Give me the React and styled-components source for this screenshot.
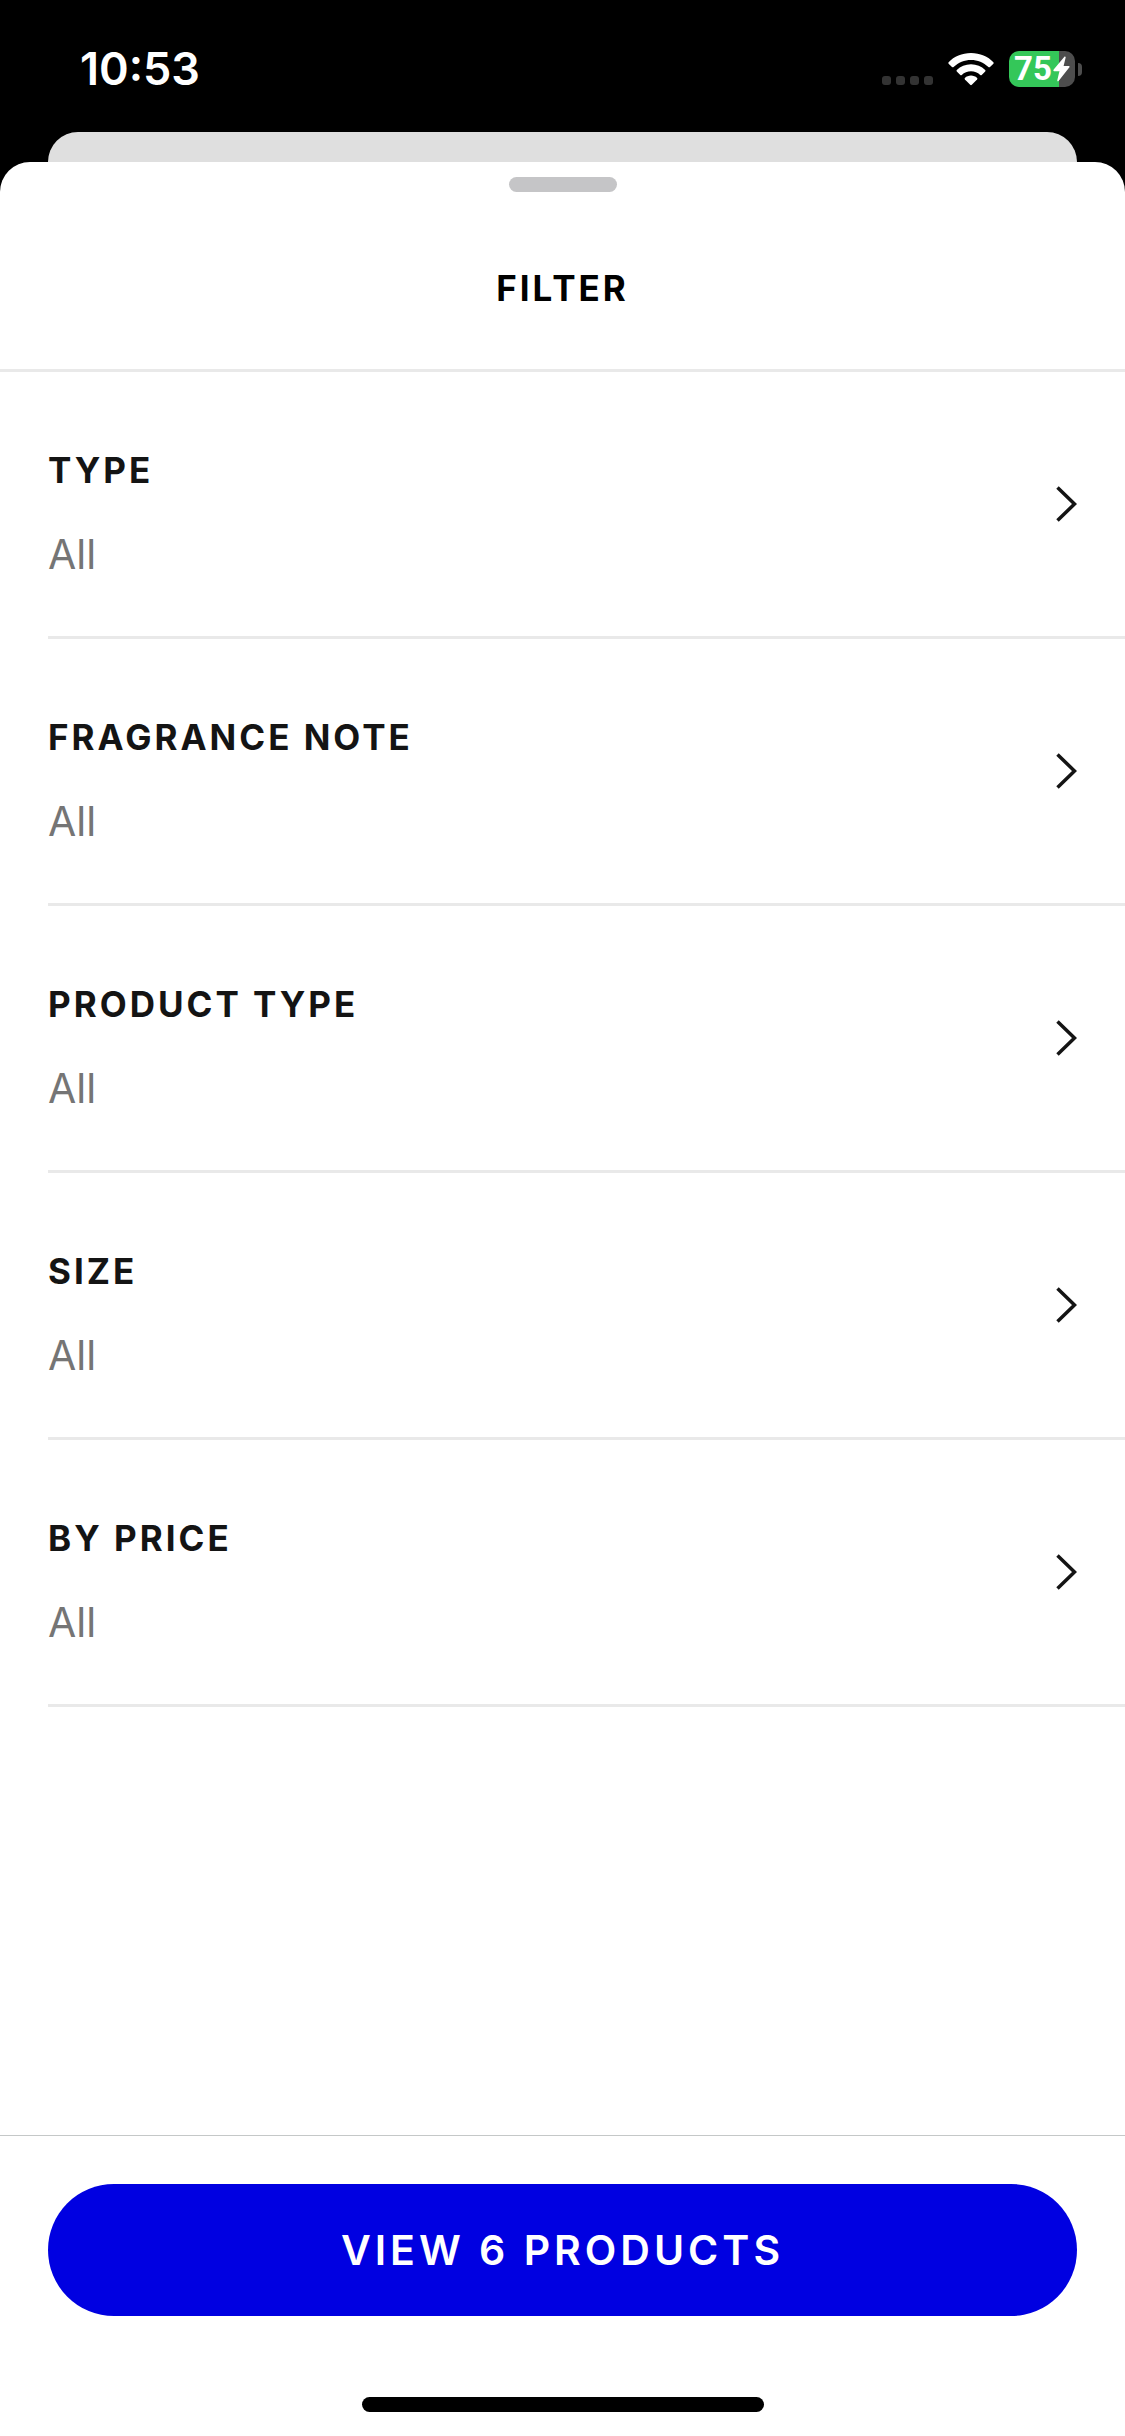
import React from 'react';
import styled, { createGlobalStyle } from 'styled-components';

const GlobalStyle = createGlobalStyle`
  * {
    box-sizing: border-box;
  }

  body {
    margin: 0;
    background-color: #000;
    font-family: Inter, 'Liberation Sans', sans-serif;
  }

  button {
    font-family: inherit;
    cursor: pointer;
  }
`;

const Screen = styled.div`
  display: flex;
  flex-direction: column;
  min-height: 100vh;
  background-color: #000;
`;

const StatusBar = styled.header`
  display: flex;
  justify-content: space-between;
  align-items: center;
  height: 132px;
  padding: 6px 43px 0 80px;
  color: #fff;
`;

const Time = styled.time`
  font-size: 45px;
  font-weight: 600;
  line-height: 48px;
`;

const StatusIcons = styled.div`
  display: flex;
  align-items: center;
  gap: 15px;
`;

const BatteryContainer = styled.div`
  display: flex;
  align-items: center;
  gap: 3px;
`;

const BatteryBody = styled.div`
  display: flex;
  align-items: center;
  justify-content: center;
  gap: 1px;
  width: 66px;
  height: 36px;
  border-radius: 10px;
  background: linear-gradient(to right, #34c759 76%, #4d4d4d 76%);
`;

const BatteryLevel = styled.span`
  font-family: Roboto, 'Liberation Sans', sans-serif;
  font-size: 33px;
  font-weight: 700;
  line-height: 36px;
`;

const BatteryTip = styled.div`
  width: 4px;
  height: 13px;
  border-radius: 0 4px 4px 0;
  background-color: #4d4d4d;
`;

const BackCard = styled.div`
  height: 30px;
  margin: 0 48px;
  border-radius: 30px 30px 0 0;
  background-color: #dfdfdf;
`;

const Sheet = styled.main`
  display: flex;
  flex: 1;
  flex-direction: column;
  border-radius: 30px 30px 0 0;
  background-color: #fff;
`;

const SheetHeader = styled.div`
  display: flex;
  flex-direction: column;
  align-items: center;
  gap: 72px;
  padding: 15px 48px 57px;
  border-bottom: 3px solid #e9e9e9;
`;

const Grabber = styled.div`
  width: 108px;
  height: 15px;
  border-radius: 8px;
  background-color: #c5c5c7;
`;

const Title = styled.h1`
  margin: 0;
  color: #000;
  font-size: 35px;
  font-weight: 700;
  line-height: 48px;
  letter-spacing: 3px;
`;

const FilterList = styled.ul`
  flex: 1;
  margin: 0;
  padding: 0 0 0 48px;
  list-style: none;
`;

const FilterButton = styled.button`
  display: flex;
  justify-content: space-between;
  align-items: center;
  width: 100%;
  padding: 0 48px 0 0;
  border: 0;
  border-bottom: 3px solid #e9e9e9;
  background: none;
  text-align: left;
`;

const FilterText = styled.span`
  display: flex;
  flex-direction: column;
  gap: 36px;
  padding: 74px 0 58px;
`;

const FilterLabel = styled.span`
  color: #141414;
  font-size: 35px;
  font-weight: 700;
  line-height: 48px;
  letter-spacing: 3px;
`;

const FilterValue = styled.span`
  color: #757575;
  font-size: 41px;
  line-height: 48px;
`;

const Footer = styled.footer`
  display: flex;
  flex-direction: column;
  align-items: center;
  gap: 81px;
  padding: 48px 48px 24px;
  border-top: 1px solid #c5c8c8;
`;

const ViewButton = styled.button`
  width: 100%;
  height: 132px;
  border: 0;
  border-radius: 66px;
  background-color: #0000e1;
  color: #fff;
  font-size: 41px;
  font-weight: 600;
  line-height: 48px;
  letter-spacing: 4px;
`;

const HomeIndicator = styled.div`
  width: 402px;
  height: 15px;
  border-radius: 8px;
  background-color: #000;
`;

const CellularDots = () => (
  <svg width="51" height="33" viewBox="0 0 51 33" fill="#333" aria-hidden="true">
    {[0, 14, 28, 42].map((x) => (
      <rect key={x} x={x} y="23" width="9" height="9" rx="3" />
    ))}
  </svg>
);

const WifiIcon = () => (
  <svg width="46" height="33" viewBox="0 0 46 33" fill="#fff" aria-hidden="true">
    <path d="M23 0C32 0 40 3.500 45.400 9.200Q46 10 45.400 10.700L42 14Q41.200 14.600 40.400 14C35.600 9.600 29.600 7 23 7S10.400 9.600 5.600 14Q4.800 14.600 4 14L.600 10.700Q0 10 .600 9.200C6 3.500 14 0 23 0Z" />
    <path d="M23 11.300C28.500 11.300 33.500 13.400 37.200 17Q37.900 17.800 37.200 18.500L33.700 21.900Q33 22.500 32.200 21.900C29.700 19.600 26.500 18.300 23 18.300S16.300 19.600 13.800 21.900Q13 22.500 12.300 21.900L8.800 18.500Q8.100 17.800 8.800 17C12.500 13.400 17.500 11.300 23 11.300Z" />
    <path d="M23 22.600C25.300 22.600 27.500 23.500 29.100 24.900Q29.800 25.600 29.100 26.400L23.800 31.800Q23 32.500 22.200 31.800L16.900 26.400Q16.200 25.600 16.900 24.900C18.500 23.500 20.700 22.600 23 22.600Z" />
  </svg>
);

const BoltIcon = () => (
  <svg width="17" height="26" viewBox="0 0 17 26" fill="#fff" aria-hidden="true">
    <path d="M11.600.500Q13 .300 12.600 1.800L10.600 10H15.800Q17.200 10.300 16.200 11.500L5.600 25Q4.200 26 4.300 24.200L6.400 15.200H1.200Q-.200 14.800.700 13.600Z" />
  </svg>
);

const Chevron = () => (
  <svg width="21" height="36" viewBox="0 0 21 36" fill="none" aria-hidden="true">
    <path d="M1.500 1.500L18.500 18L1.500 34.500" stroke="#141414" strokeWidth="3.500" />
  </svg>
);

const filters = [
  { label: 'TYPE', value: 'All' },
  { label: 'FRAGRANCE NOTE', value: 'All' },
  { label: 'PRODUCT TYPE', value: 'All' },
  { label: 'SIZE', value: 'All' },
  { label: 'BY PRICE', value: 'All' },
];

const FilterRow = ({ label, value }) => (
  <li>
    <FilterButton type="button">
      <FilterText>
        <FilterLabel>{label}</FilterLabel>
        <FilterValue>{value}</FilterValue>
      </FilterText>
      <Chevron />
    </FilterButton>
  </li>
);

const Battery = ({ level }) => (
  <BatteryContainer>
    <BatteryBody>
      <BatteryLevel>{level}</BatteryLevel>
      <BoltIcon />
    </BatteryBody>
    <BatteryTip />
  </BatteryContainer>
);

export default function App() {
  return (
    <>
      <GlobalStyle />
      <Screen>
        <StatusBar>
          <Time>10:53</Time>
          <StatusIcons>
            <CellularDots />
            <WifiIcon />
            <Battery level={75} />
          </StatusIcons>
        </StatusBar>
        <BackCard />
        <Sheet>
          <SheetHeader>
            <Grabber />
            <Title>FILTER</Title>
          </SheetHeader>
          <FilterList>
            {filters.map((filter) => (
              <FilterRow key={filter.label} {...filter} />
            ))}
          </FilterList>
          <Footer>
            <ViewButton type="button">VIEW 6 PRODUCTS</ViewButton>
            <HomeIndicator />
          </Footer>
        </Sheet>
      </Screen>
    </>
  );
}
